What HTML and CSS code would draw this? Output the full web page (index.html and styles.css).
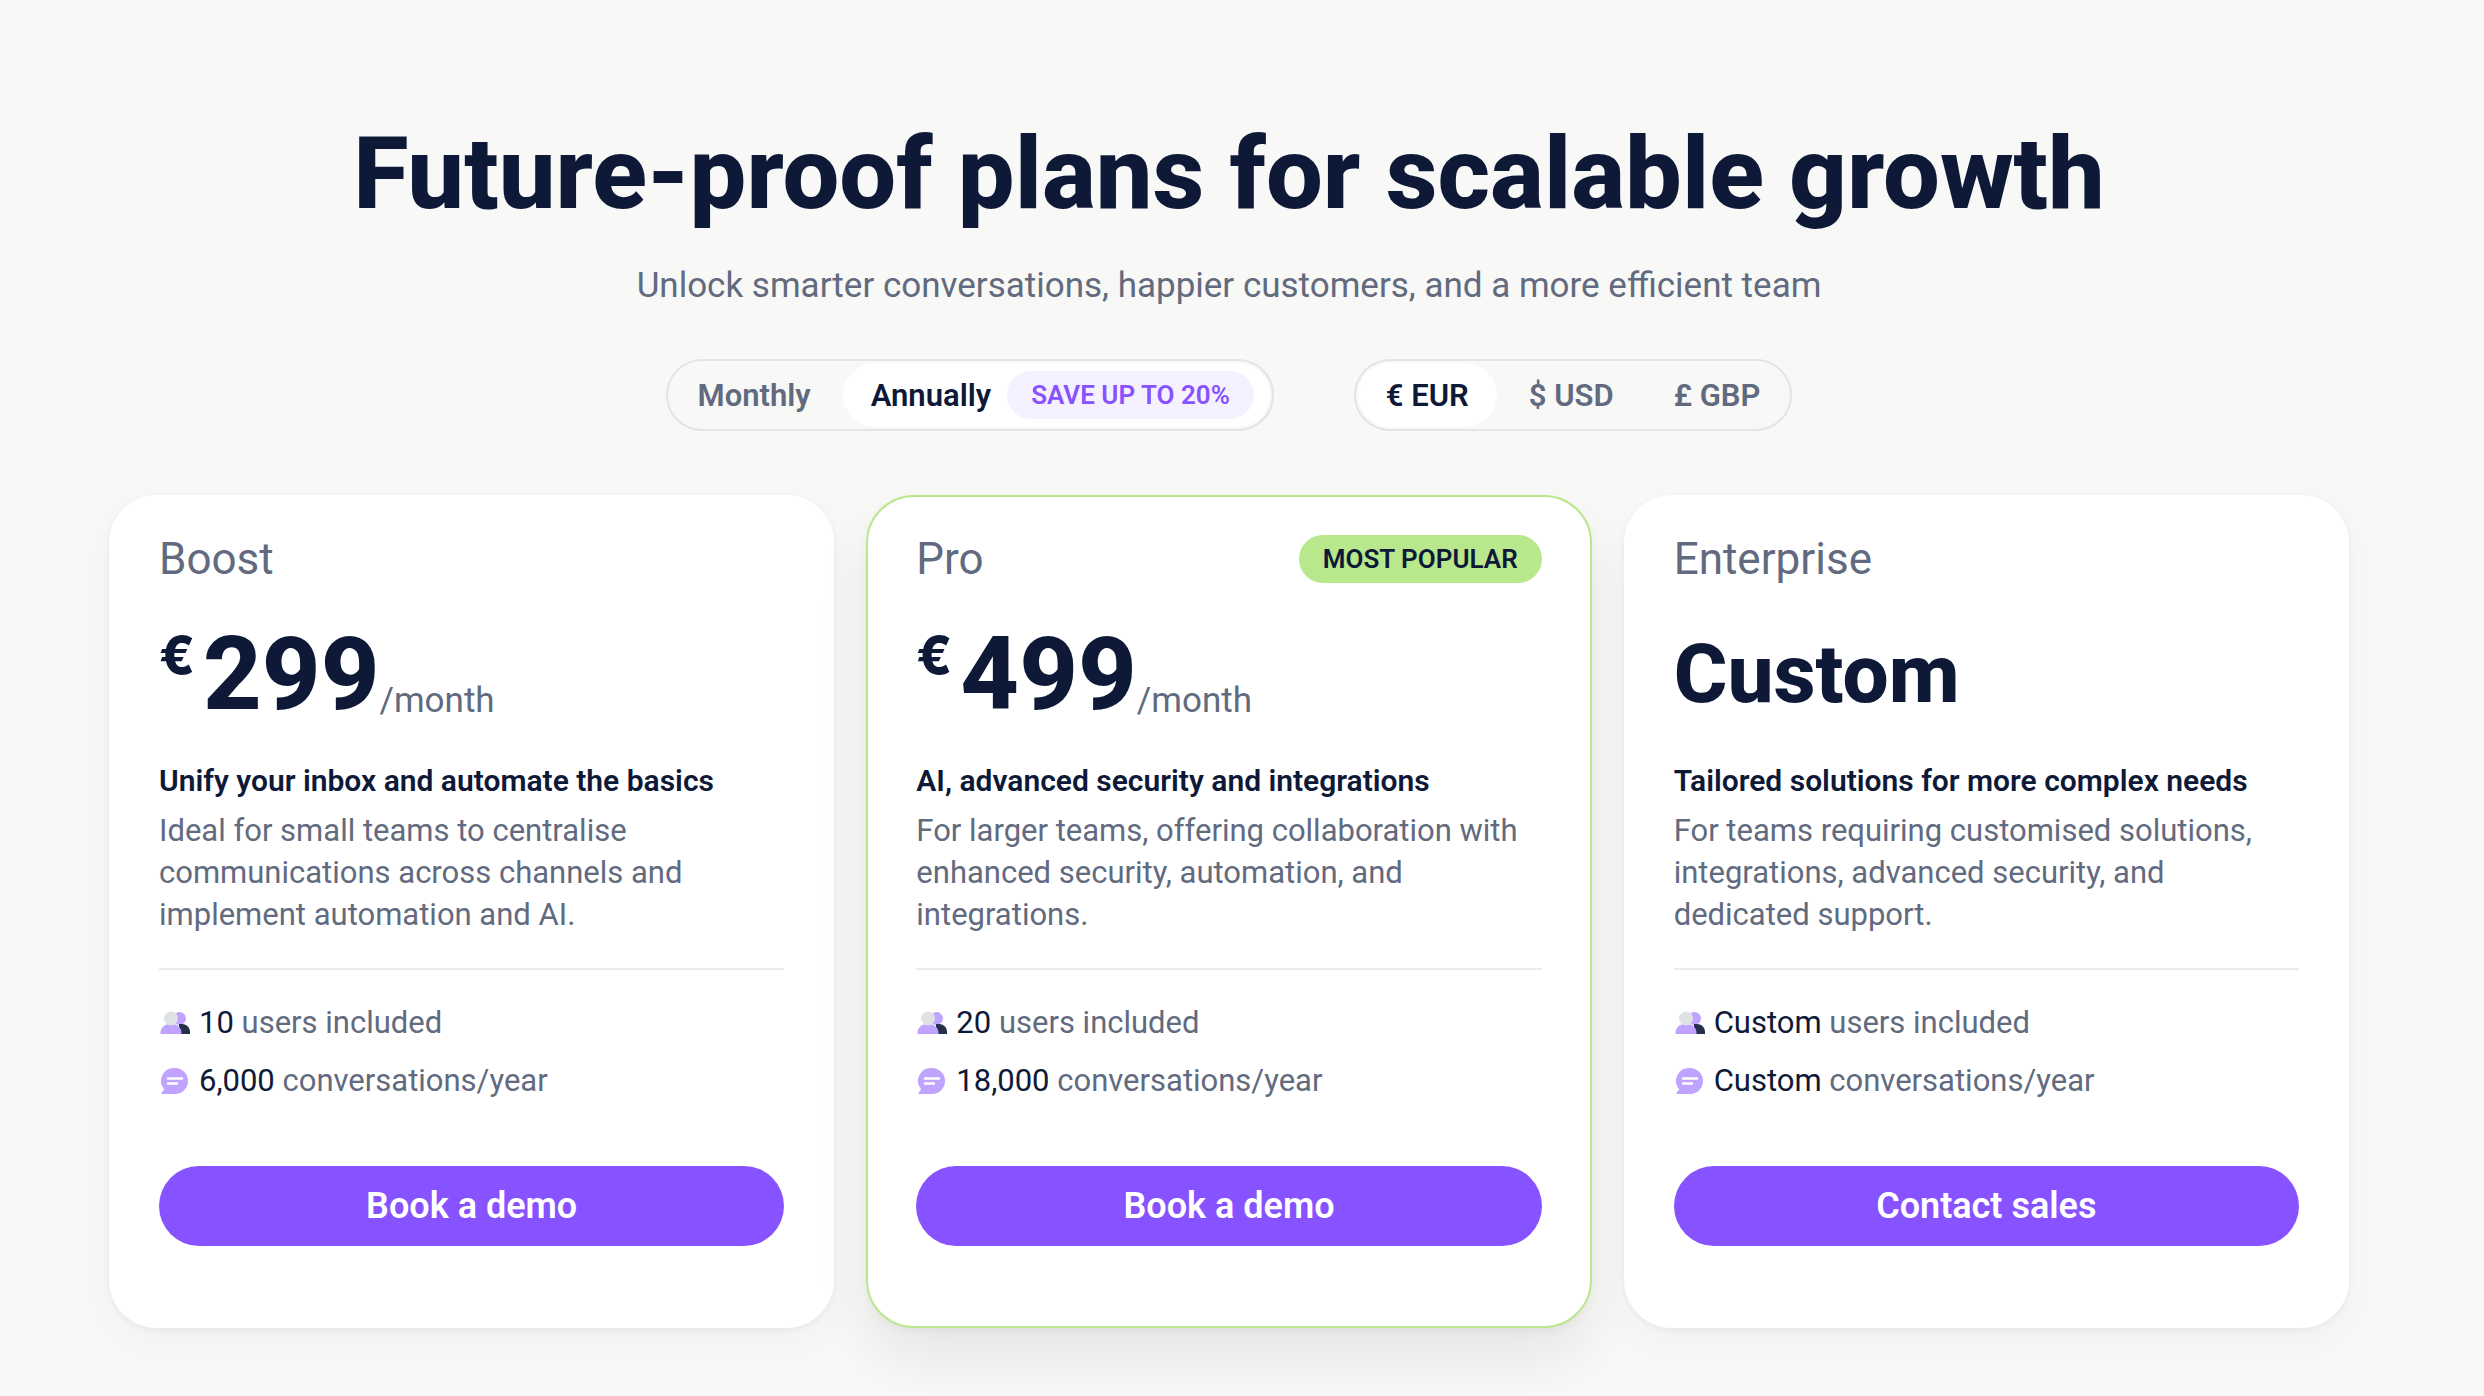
FILE: index.html
```html
<!DOCTYPE html>
<html lang="en">

<head>
    <meta charset="UTF-8">
    <meta name="viewport" content="width=device-width, initial-scale=1.0">
    <title>Pricing plans</title>
    <link rel="stylesheet" href="styles.css">
</head>

<body>
    <!-- Icons shared by the plan cards -->
    <svg class="icon-sprite" aria-hidden="true">
        <symbol id="icon-users" viewBox="0 0 32 32">
            <circle cx="20.500" cy="11.500" r="6.500" fill="#bfa3ff"/>
            <path d="M20 17h3c5 0 8 4 8 8v2H20z" fill="#26304b"/>
            <path d="M1.500 27v-1c0-5 4-9 9-9h3c5 0 9 4 9 9v1z" fill="#bfa3ff"/>
            <circle cx="12" cy="11.500" r="7" fill="#dfe2e5"/>
        </symbol>
        <symbol id="icon-chat" viewBox="0 0 32 32">
            <path d="M16 3a13 13 0 0 1 0 26H3.500c-1 0-1.300-1-.7-1.700l2.400-2.800A13 13 0 0 1 16 3z" fill="#bfa3ff"/>
            <path d="M9 13.500h14M9 18.500h9" fill="none" stroke="#fff" stroke-width="2.400" stroke-linecap="round"/>
        </symbol>
    </svg>

    <main class="pricing">
        <header class="pricing-header">
            <h1>Future-proof plans for scalable growth</h1>
            <p>Unlock smarter conversations, happier customers, and a more efficient team</p>
        </header>

        <div class="toggles">
            <div class="toggle" role="group" aria-label="Billing period">
                <button type="button" class="toggle-button">Monthly</button>
                <button type="button" class="toggle-button active with-badge">Annually <span class="badge save-badge">SAVE UP TO 20%</span></button>
            </div>
            <div class="toggle" role="group" aria-label="Currency">
                <button type="button" class="toggle-button active">€ EUR</button>
                <button type="button" class="toggle-button">$ USD</button>
                <button type="button" class="toggle-button">£ GBP</button>
            </div>
        </div>

        <div class="plans">
            <section class="plan">
                <div class="plan-title">
                    <h2>Boost</h2>
                </div>
                <div class="price"><span class="currency">€</span><span class="amount">299</span><span class="period">/month</span></div>
                <h3>Unify your inbox and automate the basics</h3>
                <p class="description">Ideal for small teams to centralise communications across channels and implement automation and AI.</p>
                <ul class="limits">
                    <li><svg class="icon"><use href="#icon-users"/></svg><span><strong>10</strong> users included</span></li>
                    <li><svg class="icon"><use href="#icon-chat"/></svg><span><strong>6,000</strong> conversations/year</span></li>
                </ul>
                <button type="button" class="cta-button">Book a demo</button>
            </section>

            <section class="plan popular">
                <div class="plan-title">
                    <h2>Pro</h2>
                    <span class="badge popular-badge">MOST POPULAR</span>
                </div>
                <div class="price"><span class="currency">€</span><span class="amount">499</span><span class="period">/month</span></div>
                <h3>AI, advanced security and integrations</h3>
                <p class="description">For larger teams, offering collaboration with enhanced security, automation, and integrations.</p>
                <ul class="limits">
                    <li><svg class="icon"><use href="#icon-users"/></svg><span><strong>20</strong> users included</span></li>
                    <li><svg class="icon"><use href="#icon-chat"/></svg><span><strong>18,000</strong> conversations/year</span></li>
                </ul>
                <button type="button" class="cta-button">Book a demo</button>
            </section>

            <section class="plan">
                <div class="plan-title">
                    <h2>Enterprise</h2>
                </div>
                <div class="price"><span class="custom">Custom</span></div>
                <h3>Tailored solutions for more complex needs</h3>
                <p class="description">For teams requiring customised solutions, integrations, advanced security, and dedicated support.</p>
                <ul class="limits">
                    <li><svg class="icon"><use href="#icon-users"/></svg><span><strong>Custom</strong> users included</span></li>
                    <li><svg class="icon"><use href="#icon-chat"/></svg><span><strong>Custom</strong> conversations/year</span></li>
                </ul>
                <button type="button" class="cta-button">Contact sales</button>
            </section>
        </div>
    </main>
</body>

</html>
```
FILE: styles.css
```css
* {
    box-sizing: border-box;
}

body {
    font-family: Roboto, "Liberation Sans", sans-serif;
    font-size: 31px;
    line-height: 42px;
    margin: 0;
    padding: 114px 26px 68px 0;
    background-color: #f8f8f6;
    color: #616a7e;
}

h1,
h2,
h3,
p,
ul {
    margin: 0;
    padding: 0;
}

button {
    font-family: inherit;
    border: none;
    cursor: pointer;
}

.icon-sprite {
    display: none;
}

.pricing {
    max-width: 2240px;
    margin: 0 auto;
}

.pricing-header {
    text-align: center;
}

.pricing-header h1 {
    font-size: 101px;
    line-height: 120px;
    font-weight: 800;
    color: #0e1938;
}

.pricing-header p {
    margin-top: 28px;
    font-size: 35px;
    line-height: 48px;
}

/* Billing and currency switches */
.toggles {
    display: flex;
    flex-wrap: wrap;
    justify-content: center;
    gap: 24px 80px;
    margin: 49px 0 64px;
}

.toggle {
    display: flex;
    gap: 4px;
    padding: 2px;
    border: 2px solid #e3e4e8;
    border-radius: 36px;
}

.toggle-button {
    display: flex;
    align-items: center;
    height: 64px;
    padding: 0 28px;
    border-radius: 32px;
    background-color: transparent;
    color: #616a7e;
    font-size: 31px;
    font-weight: 600;
}

.toggle-button.active {
    background-color: #fff;
    color: #0e1938;
}

.toggle-button.with-badge {
    gap: 16px;
    padding-right: 16px;
}

.badge {
    padding: 0 24px;
    border-radius: 24px;
    font-size: 26px;
    line-height: 48px;
    font-weight: 600;
}

.save-badge {
    background-color: #f5f1ff;
    color: #8752ff;
}

.popular-badge {
    background-color: #b9e78b;
    color: #0e1938;
}

/* Plan cards */
.plans {
    display: grid;
    grid-template-columns: repeat(3, 1fr);
    gap: 32px;
}

.plan {
    padding: 38px 48px 80px;
    background-color: #fff;
    border: 2px solid #fff;
    border-radius: 48px;
    box-shadow: 0 2px 6px rgba(0, 0, 0, 0.06), 0 16px 48px rgba(0, 0, 0, 0.03);
}

.plan.popular {
    border-color: #b9e78b;
    box-shadow: 0 4px 8px rgba(0, 0, 0, 0.04), 0 32px 56px rgba(0, 0, 0, 0.07);
}

.plan-title {
    display: flex;
    align-items: center;
    justify-content: space-between;
    height: 48px;
}

.plan-title h2 {
    font-size: 44px;
    font-weight: 400;
}

.price {
    display: flex;
    align-items: flex-end;
    height: 120px;
    margin: 31px 0 26px;
    color: #0e1938;
    font-weight: 800;
}

.currency {
    align-self: flex-start;
    min-width: 44px;
    font-family: Inter, Roboto, sans-serif;
    font-size: 52px;
    line-height: 84px;
}

.amount {
    font-size: 102px;
    line-height: 120px;
}

.period {
    color: #616a7e;
    font-size: 35px;
    line-height: 66px;
    font-weight: 400;
}

.custom {
    font-size: 82px;
    line-height: 120px;
}

.plan h3 {
    color: #0e1938;
    font-size: 30px;
    line-height: 42px;
    font-weight: 600;
}

.description {
    margin-top: 8px;
    padding-bottom: 32px;
    border-bottom: 2px solid #ebebeb;
}

.limits {
    display: flex;
    flex-direction: column;
    gap: 16px;
    margin: 32px 0 64px;
    list-style: none;
}

.limits li {
    display: flex;
    align-items: center;
    gap: 8px;
}

.limits strong {
    color: #0e1938;
    font-weight: 400;
}

.icon {
    width: 32px;
    height: 32px;
}

.cta-button {
    width: 100%;
    height: 80px;
    border-radius: 40px;
    background-color: #8752ff;
    color: #fff;
    font-size: 36px;
    font-weight: 600;
}

.cta-button:hover {
    background-color: #7440ee;
}

@media (max-width: 1700px) {
    .plans {
        grid-template-columns: 1fr;
    }
}
```
